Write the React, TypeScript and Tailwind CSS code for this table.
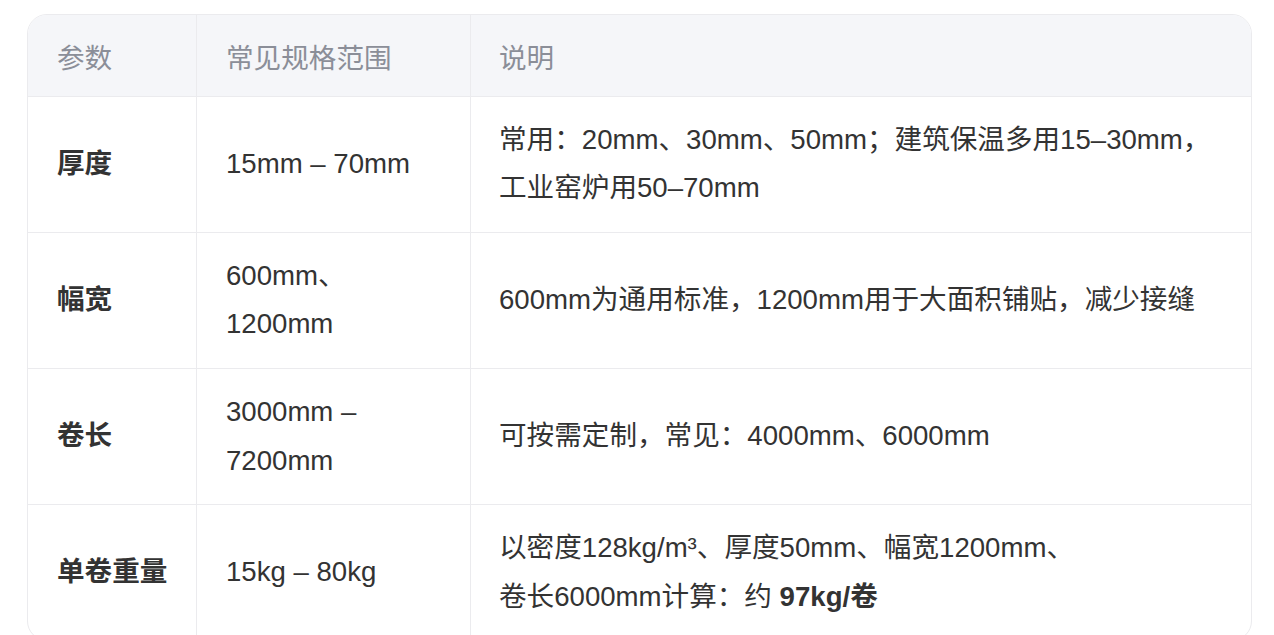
import React from "react";

const rows: { k: string; v: React.ReactNode; d: React.ReactNode }[] = [
  {
    k: "厚度",
    v: "15mm – 70mm",
    d: "常用：20mm、30mm、50mm；建筑保温多用15–30mm，工业窑炉用50–70mm",
  },
  {
    k: "幅宽",
    v: "600mm、1200mm",
    d: "600mm为通用标准，1200mm用于大面积铺贴，减少接缝",
  },
  {
    k: "卷长",
    v: "3000mm – 7200mm",
    d: "可按需定制，常见：4000mm、6000mm",
  },
  {
    k: "单卷重量",
    v: "15kg – 80kg",
    d: (
      <>
        以密度128kg/m³、厚度50mm、幅宽1200mm、
        <br />
        卷长6000mm计算：约 <strong className="font-bold">97kg/卷</strong>
      </>
    ),
  },
];

export default function App() {
  return (
    <div
      className="min-h-screen bg-white pt-[14px] pl-[27px]"
      style={{ fontFamily: '"Liberation Sans", Arial, "Noto Sans CJK SC", sans-serif' }}
    >
      <div className="w-[1225px] rounded-[20px] border border-[#ebebee] overflow-hidden">
        <div className="grid grid-cols-[168px_274px_1fr] text-[27.6px] leading-[48.6px]">
          <div className="bg-[#f5f6f9] text-[#8b8e98] pl-[29px] pr-[20px] pt-[20px] pb-[12px]">参数</div>
          <div className="bg-[#f5f6f9] text-[#8b8e98] pl-[29px] pr-[20px] pt-[20px] pb-[12px] border-l border-[#ebebee]">常见规格范围</div>
          <div className="bg-[#f5f6f9] text-[#8b8e98] pl-[28px] pr-[20px] pt-[20px] pb-[12px] border-l border-[#ebebee]">说明</div>
          {rows.map((r) => (
            <React.Fragment key={r.k}>
              <div className="flex items-center pl-[29px] pr-[20px] py-[19px] border-t border-[#ebebee] font-bold text-[#333333]">
                {r.k}
              </div>
              <div className="flex items-center pl-[29px] pr-[29px] py-[19px] border-t border-l border-[#ebebee] text-[#333333]">
                <div>{r.v}</div>
              </div>
              <div className="flex items-center pl-[28px] pr-[20px] py-[19px] border-t border-l border-[#ebebee] text-[#333333]">
                <div>{r.d}</div>
              </div>
            </React.Fragment>
          ))}
        </div>
      </div>
    </div>
  );
}
